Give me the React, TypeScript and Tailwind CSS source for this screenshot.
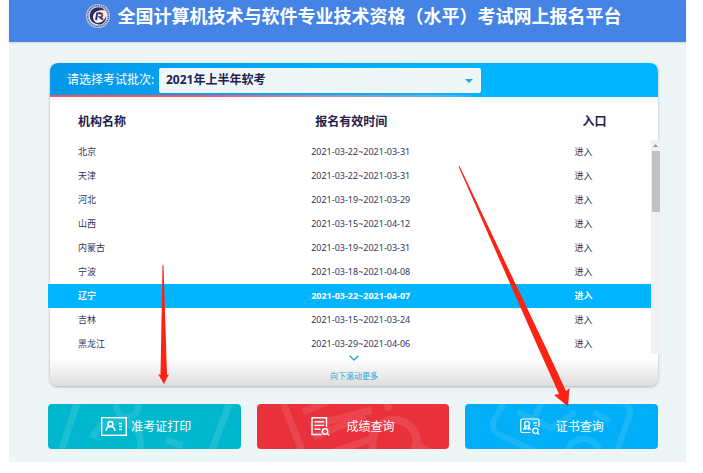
import React from 'react';
import { ChevronDown } from 'lucide-react';

interface Agency {
  name: string;
  period: string;
  active?: boolean;
}

const agencies: Agency[] = [
  { name: '北京', period: '2021-03-22~2021-03-31' },
  { name: '天津', period: '2021-03-22~2021-03-31' },
  { name: '河北', period: '2021-03-19~2021-03-29' },
  { name: '山西', period: '2021-03-15~2021-04-12' },
  { name: '内蒙古', period: '2021-03-19~2021-03-31' },
  { name: '宁波', period: '2021-03-18~2021-04-08' },
  { name: '辽宁', period: '2021-03-22~2021-04-07', active: true },
  { name: '吉林', period: '2021-03-15~2021-03-24' },
  { name: '黑龙江', period: '2021-03-29~2021-04-06' }
];

const Logo: React.FC = () => (
  <svg viewBox="0 0 24 24" className="h-6 w-6" aria-hidden="true">
    <circle cx="12" cy="12" r="12" fill="#c9cfe0" />
    <circle cx="12" cy="12" r="10.4" fill="none" stroke="#5b628a" strokeWidth="1.6" strokeDasharray="1.3 0.8" />
    <circle cx="12" cy="12" r="9" fill="#f3f4f8" />
    <path d="M19 6.500A8.600 8.600 0 0 0 3.800 10.200C2.800 16 8 20.800 13.200 20 9.600 19 7 16.500 7 13 7 8.500 12 5.600 19 6.500z" fill="#272c62" />
    <path d="M8.500 18.500c5 1.500 10-1 11.500-6.500.6 5-3 8.600-7.500 8.600z" fill="#272c62" />
    <path d="M10 16l1.200-6.600h3c3 0 2.700 3.600-.2 3.900l3.200 2.500" fill="none" stroke="#30366d" strokeWidth="1.900" />
    <path d="M12.300 8.500h2.500c2.400.6 2 3.300.2 4l-1.400.2" fill="none" stroke="#cf3b52" strokeWidth="1.200" />
  </svg>
);

const TicketIcon: React.FC = () => (
  <svg viewBox="0 0 26 19" className="h-[19px] w-[26px]" fill="none" stroke="currentColor" strokeWidth="1.4" aria-hidden="true">
    <rect x="0.700" y="0.700" width="24.600" height="17.600" />
    <circle cx="9.500" cy="7" r="2.500" />
    <path d="M5 14c.2-3 2-4.500 4.500-4.500S13.800 11 14 14M18 6.500H21M18 9.500H21M18 12.500H21" />
  </svg>
);

const ScoreIcon: React.FC = () => (
  <svg viewBox="0 0 19 19" className="h-[19px] w-[19px]" fill="none" stroke="currentColor" strokeWidth="1.400" aria-hidden="true">
    <path d="M10.500 17.500H1V.8h14.500v9.500M3.500 4.700h9.500M3.500 8.400h9.500M3.500 12.200h6" />
    <circle cx="14" cy="14.500" r="2.700" />
    <path d="M16 16.500l2.200 1.800" />
  </svg>
);

const CertificateIcon: React.FC = () => (
  <svg viewBox="0 0 20 18" className="h-[18px] w-5" fill="none" stroke="currentColor" strokeWidth="1.200" aria-hidden="true">
    <path d="M10.500 14.500H2A1.200 1.200 0 0 1 .8 13.300V2.200A1.200 1.200 0 0 1 2 1h15.800A1.200 1.200 0 0 1 19 2.200V9" />
    <circle cx="7" cy="5.800" r="2.400" />
    <path d="M3.500 12l1.700-4.200M10.500 12L8.800 7.800M3.500 10.500h7M5.600 8.500V12M8.400 8.500V12M13.300 4.800h3.500M14.300 7.500h2.500" />
    <circle cx="15.500" cy="12.800" r="2.700" />
    <path d="M17.500 14.800l1.700 2" />
  </svg>
);

const actions = [
  {
    label: '准考证打印',
    color: 'bg-[#02b7cd] gap-1 pl-1',
    icon: <TicketIcon />,
    pattern: (
      <>
        <path d="M30 -4L12 50M182 -4L162 50" strokeWidth="7" />
        <circle cx="79" cy="2" r="11" strokeWidth="6" />
        <path d="M44 34c5-12 16-17 30-16 14 2 20 12 18 30M118 36l16 6" strokeWidth="7" />
      </>
    )
  },
  {
    label: '成绩查询',
    color: 'bg-[#e9323c] gap-4',
    icon: <ScoreIcon />,
    pattern: (
      <>
        <path d="M25 -4L46 50M46 8L92 -12M53 22L114 6M56 33L108 12M76 48l38-13M128 -4l4 10" strokeWidth="7" />
        <circle cx="137" cy="38" r="22" strokeWidth="8" />
        <path d="M155 39l16 9" strokeWidth="8" />
      </>
    )
  },
  {
    label: '证书查询',
    color: 'bg-[#00aff7] gap-4',
    icon: <CertificateIcon />,
    pattern: (
      <>
        <path d="M40 -4L28 18Q26 27 35 31L76 50M80 -6l76 4q11 3 8 13L151 48M128 8l16 9M120 18l14 8" strokeWidth="6" />
        <path d="M52 8l34 16 24-16M66 20L78 -4" strokeWidth="6" />
        <circle cx="118" cy="52" r="17" strokeWidth="6" />
      </>
    )
  }
];

const AgencyTable: React.FC = () => (
  <div className="-ml-0.5 -mr-0.5 flex">
    <table className="flex-1 table-fixed border-collapse text-left text-[9px] leading-3 text-[#353559]">
      <thead className="text-xs text-[#22224d]">
        <tr className="h-[43px]">
          <th className="w-[39%] pl-[30px] pt-1.5 font-bold">机构名称</th>
          <th className="w-[44%] pl-8 pt-1.5 font-bold">报名有效时间</th>
          <th className="pl-[34px] pt-1.5 font-bold">入口</th>
        </tr>
      </thead>
      <tbody>
        {agencies.map((agency) => (
          <tr key={agency.name} className={agency.active ? 'h-6 bg-[#00b4ff] font-bold text-white' : 'h-6'}>
            <td className="pl-[30px]">{agency.name}</td>
            <td className="pl-7">{agency.period}</td>
            <td className="pl-[26px]">
              <a href="#enter">进入</a>
            </td>
          </tr>
        ))}
      </tbody>
    </table>
    <div className="mb-0.5 mt-[43px] flex w-[9px] flex-col items-center bg-[#f1f1f1]">
      <svg viewBox="0 0 9 11" className="h-[11px] w-[9px]" aria-hidden="true">
        <path d="M4.500 4l2.500 3h-5z" fill="#999" />
      </svg>
      <div className="h-[61px] w-2 bg-[#c1c1c1]" />
    </div>
  </div>
);

const App: React.FC = () => {
  return (
    <div className="relative bg-white pb-[11px] font-['Noto_Sans','Noto_Sans_CJK_SC',sans-serif]">
      <div className="ml-[9px] mr-[17px] bg-[#edf5f7]">
        <header className="flex h-[42px] items-center justify-center gap-2 bg-[#4584e5] pb-2.5 pl-3 text-white shadow-sm">
          <Logo />
          <h1 className="whitespace-nowrap text-lg font-bold leading-6">全国计算机技术与软件专业技术资格（水平）考试网上报名平台</h1>
        </header>

        <main className="pb-[13px] pl-[39px] pr-7 pt-[21px]">
          <section className="ml-0.5 rounded-lg bg-white shadow-[0_1px_3px_#aab4b8]">
            <div className="flex h-8 items-center rounded-t-lg bg-linear-to-r from-[#0697e8] to-[#00b4ff] to-60% pl-[17px] pt-0.5">
              <label htmlFor="batch" className="w-[92px] whitespace-nowrap text-xs text-white">
                请选择考试批次:
              </label>
              <div className="relative w-[322px]">
                <select
                  id="batch"
                  className="block h-[25px] w-full appearance-none rounded-xs bg-[#eef6f8] pl-[7px] text-xs font-bold text-[#22224d]"
                >
                  <option>2021年上半年软考</option>
                </select>
                <svg viewBox="0 0 8 4" className="pointer-events-none absolute right-2 top-[11px] h-1 w-2" aria-hidden="true">
                  <path d="M0 0h8L4 4z" fill="#18a6d8" />
                </svg>
              </div>
            </div>
            <div className="h-0.5 bg-linear-to-r from-[#ed5560] from-25% to-[#00b4ff] to-70%" />

            <AgencyTable />

            <div className="-mt-1 flex h-[34px] flex-col items-center rounded-b-lg bg-linear-to-b from-transparent from-20% to-[#dddddd] text-[8px] leading-3 text-[#22a7df]">
              <ChevronDown className="-mt-0.5 h-4 w-4 shrink-0" strokeWidth={2} />
              <button type="button" className="mt-1">向下滚动更多</button>
            </div>
          </section>

          <nav className="mt-[18px] grid grid-cols-3 gap-4">
            {actions.map((action) => (
              <button
                key={action.label}
                type="button"
                className={`relative flex h-[45px] items-center justify-center overflow-hidden rounded-sm text-xs text-white ${action.color}`}
              >
                <svg
                  viewBox="0 0 192 45"
                  preserveAspectRatio="none"
                  className="absolute inset-0 h-full w-full opacity-10"
                  fill="none"
                  stroke="white"
                  aria-hidden="true"
                >
                  {action.pattern}
                </svg>
                {action.icon}
                <span>{action.label}</span>
              </button>
            ))}
          </nav>
        </main>
      </div>

      {/* pointers to the ticket and certificate buttons */}
      <svg viewBox="0 0 703 473" className="pointer-events-none absolute left-0 top-0 w-full" aria-hidden="true">
        <g fill="#fb2414">
          <path d="M162.500 265h1l3.500 110 2-1-5 10-6-10 2.500 1z" />
          <path d="M458.500 166.500l1-.5 87.500 184 19 41 3.500-3-1.500 18.500-14-11.500 5-1-20-44.500z" />
        </g>
      </svg>
    </div>
  );
};

export default App;
